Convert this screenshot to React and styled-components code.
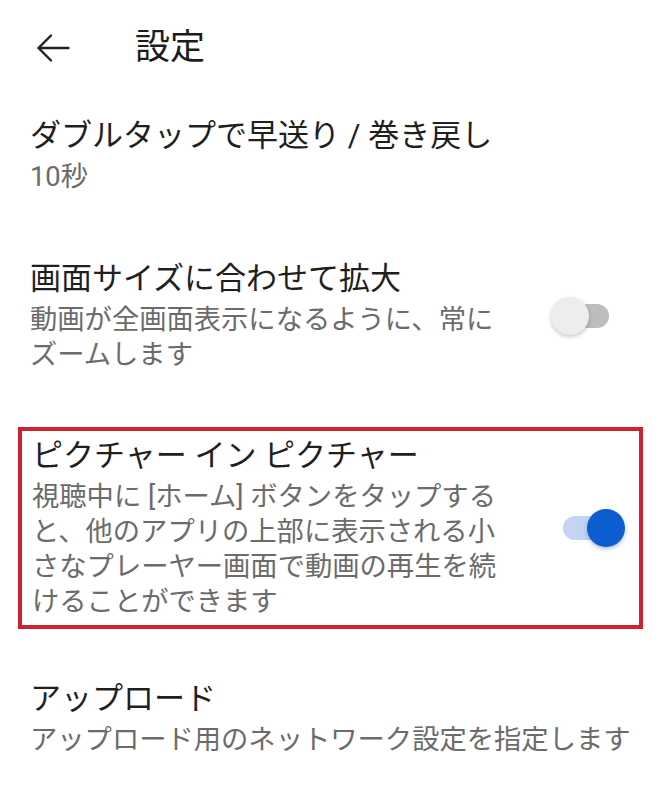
import React from "react";
import styled, { createGlobalStyle } from "styled-components";

const GlobalStyle = createGlobalStyle`
  html, body {
    margin: 0;
    padding: 0;
    background: #ffffff;
  }
  body {
    font-family: Roboto, "Noto Sans CJK JP", "Noto Sans", sans-serif;
    -webkit-font-smoothing: antialiased;
  }
`;

const Page = styled.div`
  width: 669px;
  min-height: 801px;
  background: #ffffff;
  display: flex;
  flex-direction: column;
`;

const Header = styled.header`
  height: 96px;
  display: flex;
  align-items: center;
  padding-left: 36px;
  gap: 65px;
`;

const BackButton = styled.button`
  width: 34px;
  height: 30px;
  padding: 0;
  border: none;
  background: transparent;
  display: flex;
  align-items: center;
  justify-content: center;
`;

const HeaderTitle = styled.h1`
  margin: 0;
  font-size: 35px;
  font-weight: 400;
  line-height: 44px;
  color: #1c1c1c;
`;

const Row = styled.div`
  display: flex;
  align-items: center;
  gap: 51px;
  padding: ${(p) => (p.$highlight ? "5px 14px 5px 10px" : "20px 44px 44px 30px")};
  margin: ${(p) => (p.$highlight ? "10px 26px 30px 18px" : "0")};
  border: ${(p) => (p.$highlight ? "4px solid #d0212f" : "none")};
`;

const TextBlock = styled.div`
  flex: 1;
  min-width: 0;
  max-width: ${(p) => (p.$narrow ? "470px" : "none")};
  white-space: ${(p) => (p.$narrow ? "normal" : "nowrap")};
  display: flex;
  flex-direction: column;
  gap: 4px;
`;

const Title = styled.div`
  font-size: 31px;
  line-height: 40px;
  color: #1f1f1f;
  white-space: nowrap;
`;

const Subtitle = styled.div`
  font-size: 27.3px;
  line-height: 35px;
  color: #6b6b6b;
`;

const SwitchBox = styled.div`
  position: relative;
  flex: none;
  width: 72px;
  height: 40px;
`;

const Track = styled.div`
  position: absolute;
  left: 10px;
  top: 8px;
  width: 48px;
  height: 24px;
  border-radius: 12px;
  background: ${(p) => (p.$on ? "#c3d5f3" : "#bdbdbd")};
`;

const Thumb = styled.div`
  position: absolute;
  top: 1px;
  left: ${(p) => (p.$on ? "34px" : "0px")};
  width: 38px;
  height: 38px;
  border-radius: 50%;
  background: ${(p) => (p.$on ? "#0b5dd0" : "#ededed")};
  box-shadow: ${(p) =>
    p.$on
      ? "0 2px 4px rgba(20, 70, 160, 0.35)"
      : "0 2px 4px rgba(0, 0, 0, 0.22)"};
`;

function Switch({ on }) {
  return (
    <SwitchBox>
      <Track $on={on} />
      <Thumb $on={on} />
    </SwitchBox>
  );
}

function BackArrow() {
  return (
    <svg width="34" height="30" viewBox="0 0 34 30" fill="none">
      <path
        d="M2.5 15 H32.5 M15 2.5 L2.5 15 L15 27.5"
        stroke="#222"
        strokeWidth="2.4"
        strokeLinecap="round"
        strokeLinejoin="round"
      />
    </svg>
  );
}

const items = [
  { title: "ダブルタップで早送り / 巻き戻し", sub: "10秒" },
  {
    title: "画面サイズに合わせて拡大",
    sub: "動画が全画面表示になるように、常にズームします",
    toggle: false,
  },
  {
    title: "ピクチャー イン ピクチャー",
    sub: "視聴中に [ホーム] ボタンをタップすると、他のアプリの上部に表示される小さなプレーヤー画面で動画の再生を続けることができます",
    toggle: true,
    highlight: true,
  },
  { title: "アップロード", sub: "アップロード用のネットワーク設定を指定します" },
];

export default function App() {
  return (
    <>
      <GlobalStyle />
      <Page>
        <Header>
          <BackButton aria-label="戻る">
            <BackArrow />
          </BackButton>
          <HeaderTitle>設定</HeaderTitle>
        </Header>
        {items.map((it, i) => {
          const hasToggle = it.toggle !== undefined;
          return (
            <Row key={i} $highlight={it.highlight}>
              <TextBlock $narrow={hasToggle}>
                <Title>{it.title}</Title>
                <Subtitle>{it.sub}</Subtitle>
              </TextBlock>
              {hasToggle && <Switch on={it.toggle} />}
            </Row>
          );
        })}
      </Page>
    </>
  );
}
